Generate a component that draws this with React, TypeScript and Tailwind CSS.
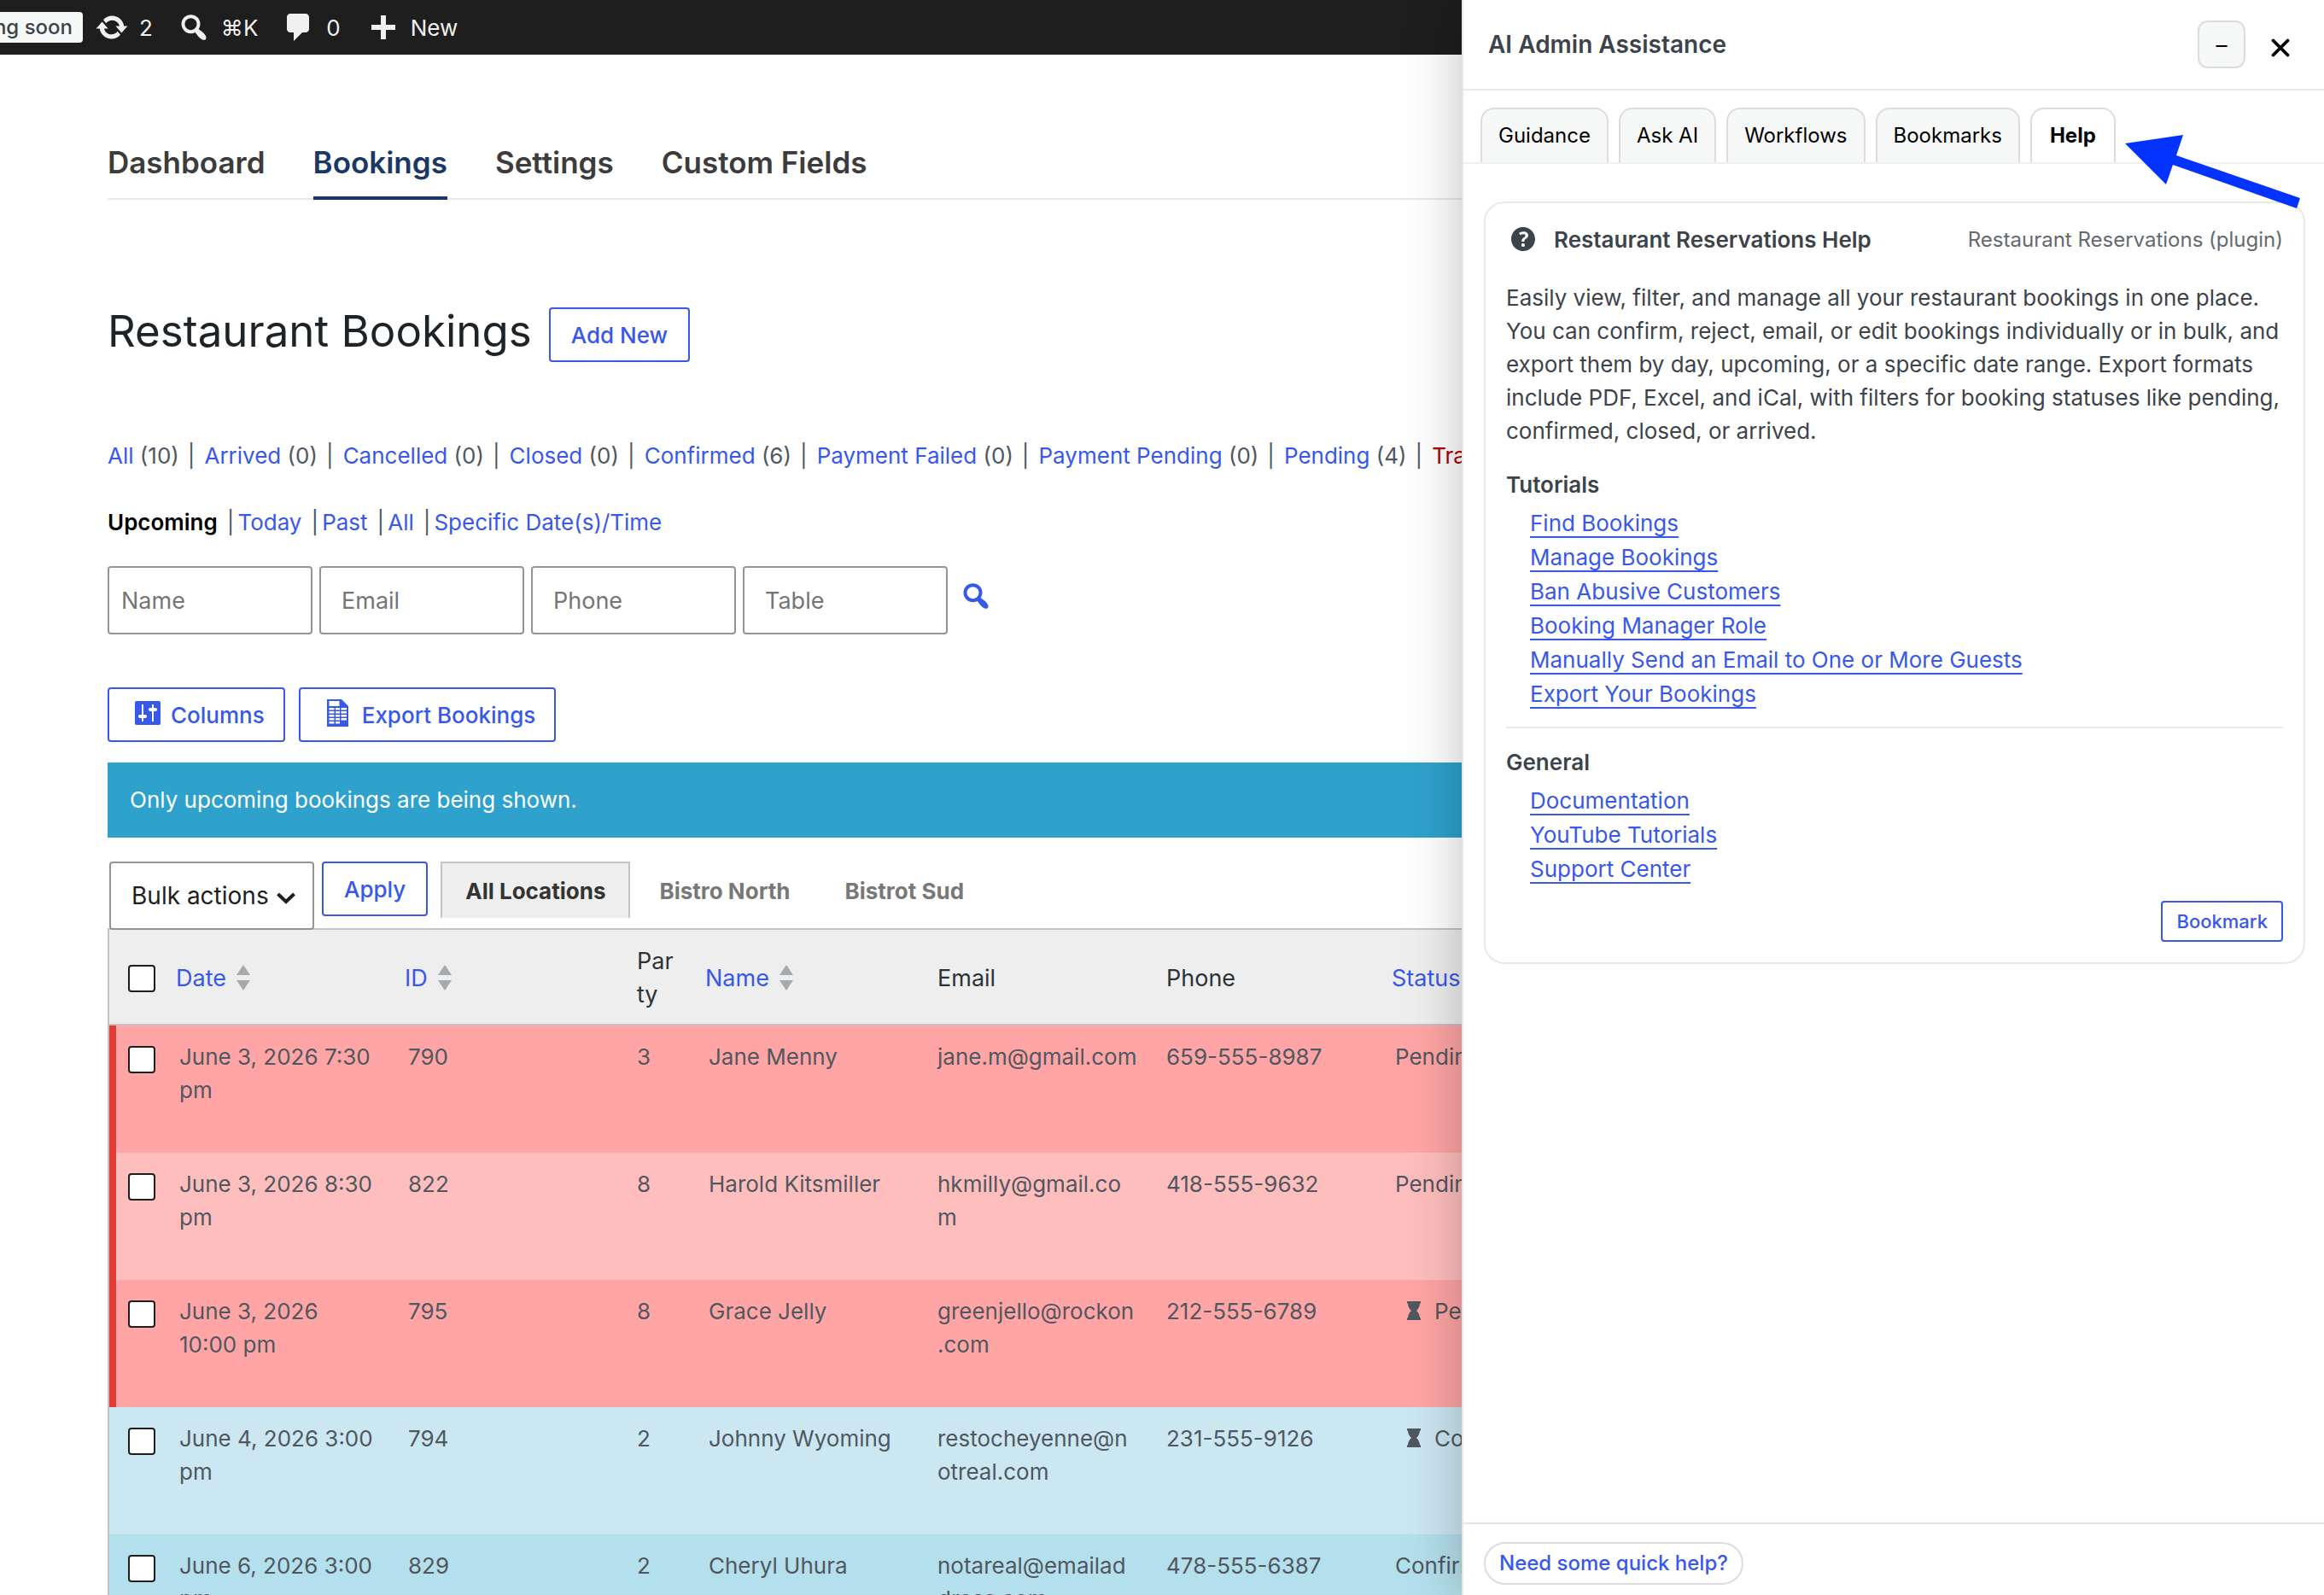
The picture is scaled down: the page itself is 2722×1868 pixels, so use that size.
import React from 'react';

const statusFilters = [
    { label: 'All', count: 10 },
    { label: 'Arrived', count: 0 },
    { label: 'Cancelled', count: 0 },
    { label: 'Closed', count: 0 },
    { label: 'Confirmed', count: 6 },
    { label: 'Payment Failed', count: 0 },
    { label: 'Payment Pending', count: 0 },
    { label: 'Pending', count: 4 }
];

const bookings = [
    { id: 790, date: 'June 3, 2026 7:30 pm', party: 3, name: 'Jane Menny', email: 'jane.m@gmail.com', phone: '659-555-8987', status: 'Pending', late: false, row: 'bg-[#ffa5a5]', edge: 'border-[#e13c38]' },
    { id: 822, date: 'June 3, 2026 8:30 pm', party: 8, name: 'Harold Kitsmiller', email: 'hkmilly@gmail.com', phone: '418-555-9632', status: 'Pending', late: false, row: 'bg-[#ffbebe]', edge: 'border-[#e13c38]' },
    { id: 795, date: 'June 3, 2026 10:00 pm', party: 8, name: 'Grace Jelly', email: 'greenjello@rockon.com', phone: '212-555-6789', status: 'Pending', late: true, row: 'bg-[#ffa5a5]', edge: 'border-[#e13c38]' },
    { id: 794, date: 'June 4, 2026 3:00 pm', party: 2, name: 'Johnny Wyoming', email: 'restocheyenne@notreal.com', phone: '231-555-9126', status: 'Confirmed', late: true, row: 'bg-[#cbe7f2]', edge: 'border-transparent' },
    { id: 829, date: 'June 6, 2026 3:00 pm', party: 2, name: 'Cheryl Uhura', email: 'notareal@emailaddress.com', phone: '478-555-6387', status: 'Confirmed', late: false, row: 'bg-[#b4dfec]', edge: 'border-transparent' }
];

const tutorials = [
    'Find Bookings',
    'Manage Bookings',
    'Ban Abusive Customers',
    'Booking Manager Role',
    'Manually Send an Email to One or More Guests',
    'Export Your Bookings'
];

const general = ['Documentation', 'YouTube Tutorials', 'Support Center'];

const SearchIcon = ({ className }: { className: string }) => (
    <svg viewBox="0 0 20 20" className={className} fill="currentColor" aria-hidden="true">
        <path d="M12.14 4.18c1.87 1.87 2.11 4.75.72 6.89.12.1.22.21.36.31.2.16.47.36.81.59.34.24.56.39.66.47.42.31.73.57.94.78.32.32.6.65.84 1 .25.35.44.69.59 1.04.14.35.21.68.18 1-.02.32-.14.59-.36.81s-.49.34-.81.36c-.31.02-.65-.04-.99-.19-.35-.14-.7-.34-1.04-.59-.35-.24-.68-.52-1-.84-.21-.21-.47-.52-.77-.93-.1-.13-.25-.35-.47-.66-.22-.32-.4-.57-.56-.78-.16-.2-.29-.35-.44-.5-2.07 1.09-4.69.76-6.44-.98-2.14-2.15-2.14-5.64 0-7.78 2.15-2.15 5.63-2.15 7.78 0zm-1.41 6.36c1.36-1.37 1.36-3.58 0-4.95-1.37-1.37-3.59-1.37-4.95 0-1.37 1.37-1.37 3.58 0 4.95 1.36 1.37 3.58 1.37 4.95 0z" />
    </svg>
);

const AdminBar = () => (
    <header className="flex h-16 items-center bg-[#1e1e1e] text-[26px] text-[#f0f0f1]">
        <a href="#" className="flex h-9 w-[97px] justify-end items-center overflow-hidden whitespace-nowrap rounded-r-[4px] bg-[#f6f7f7] pr-3 text-[24px] font-medium text-[#3c434a]">
            Coming soon
        </a>
        <a href="#" className="ml-[14px] flex items-center gap-3">
            <svg viewBox="0 0 20 20" className="size-10" fill="currentColor" aria-hidden="true">
                <path d="M10.2 3.28c3.53 0 6.43 2.61 6.92 6h2.08l-3.5 4-3.5-4h2.32c-.45-1.97-2.21-3.45-4.32-3.45-1.45 0-2.73.71-3.54 1.78L4.95 5.66C6.23 4.2 8.11 3.28 10.2 3.28zm-.4 13.44c-3.52 0-6.43-2.61-6.92-6H.8l3.5-4c1.17 1.33 2.33 2.67 3.5 4H5.48c.45 1.97 2.21 3.45 4.32 3.45 1.45 0 2.73-.71 3.54-1.78l1.71 1.95c-1.28 1.46-3.15 2.38-5.25 2.38z" />
            </svg>
            2
        </a>
        <a href="#" className="ml-7 flex items-center gap-3">
            <SearchIcon className="size-10" />
            ⌘K
        </a>
        <a href="#" className="ml-7 flex items-center gap-3">
            <svg viewBox="0 0 20 20" className="size-10" fill="currentColor" aria-hidden="true">
                <path d="M5 2h9q.82 0 1.410.59T16 4v7q0 .82-.59 1.410T14 13h-2l-5 5v-5H5q-.82 0-1.410-.59T3 11V4q0-.82.59-1.410T5 2z" />
            </svg>
            0
        </a>
        <a href="#" className="ml-[30px] flex items-center gap-3">
            <svg viewBox="0 0 20 20" className="size-10" fill="currentColor" aria-hidden="true">
                <path d="M17 8.500v3h-5.500V17h-3v-5.500H3v-3h5.500V3h3v5.500H17z" />
            </svg>
            New
        </a>
    </header>
);

const SortArrows = () => (
    <svg viewBox="0 0 16 30" className="h-[30px] w-4" fill="#a7aaad" aria-hidden="true">
        <path d="M8 0l8 12H0zM8 30L0 18h16z" />
    </svg>
);

const SortHeader = ({ label }: { label: string }) => (
    <th scope="col" className="px-4 pt-[2px] text-left font-normal">
        <a href="#" className="flex items-center gap-3 text-[#3858e9]">
            {label}
            <SortArrows />
        </a>
    </th>
);

const Check = ({ label }: { label: string }) => (
    <input
        type="checkbox"
        aria-label={label}
        className="block size-8 appearance-none rounded-[4px] border-2 border-[#1e1e1e] bg-white checked:bg-[#3858e9]"
    />
);

const BookingsTable = () => (
    <div className="overflow-hidden">
        <table className="w-[1757px] table-fixed border-collapse border-2 border-[#c3c4c7] text-[26px] leading-[39px] text-[#50575e]">
            <colgroup>
                <col className="w-[63px]" />
                <col className="w-[268px]" />
                <col className="w-[268px]" />
                <col className="w-[84px]" />
                <col className="w-[268px]" />
                <col className="w-[268px]" />
                <col className="w-[268px]" />
                <col className="w-[268px]" />
            </colgroup>
            <thead className="border-b-2 border-[#c3c4c7] bg-[#eee] text-[27px] text-[#2c3338]">
                <tr className="h-28">
                    <td className="pt-1 pl-[22px]">
                        <Check label="Select all" />
                    </td>
                    <SortHeader label="Date" />
                    <SortHeader label="ID" />
                    <th scope="col" className="wrap-anywhere px-5 pt-[2px] text-left font-normal">Party</th>
                    <SortHeader label="Name" />
                    <th scope="col" className="px-5 pt-[2px] text-left font-normal">Email</th>
                    <th scope="col" className="px-5 pt-[2px] text-left font-normal">Phone</th>
                    <SortHeader label="Status" />
                </tr>
            </thead>
            <tbody>
                {bookings.map((booking) => (
                    <tr key={booking.id} className={`h-[149px] align-top ${booking.row}`}>
                        <td className="p-0">
                            <div className={`h-[149px] border-l-8 pt-6 pl-[14px] ${booking.edge}`}>
                                <Check label={`Select booking ${booking.id}`} />
                            </div>
                        </td>
                        <td className="px-5 pt-[17px]">{booking.date}</td>
                        <td className="px-5 pt-[17px]">{booking.id}</td>
                        <td className="px-5 pt-[17px]">{booking.party}</td>
                        <td className="px-5 pt-[17px]">{booking.name}</td>
                        <td className="wrap-anywhere pt-[17px] pr-[14px] pl-5">{booking.email}</td>
                        <td className="px-5 pt-[17px]">{booking.phone}</td>
                        <td className="px-5 pt-[17px]">
                            {booking.late && (
                                <svg viewBox="0 0 16 22" className="mr-4 ml-[14px] inline h-[22px] w-4 align-[-1px]" fill="currentColor" aria-label="Late">
                                    <path d="M0 0h16v2.500h-1c-.3 4-1.500 6-4 8.500 2.500 2.500 3.700 4.500 4 8.500h1V22H0v-2.500h1c.3-4 1.500-6 4-8.500-2.500-2.500-3.700-4.500-4-8.500H0z" />
                                </svg>
                            )}
                            {booking.status}
                        </td>
                    </tr>
                ))}
            </tbody>
        </table>
    </div>
);

const SearchField = ({ label, className }: { label: string; className: string }) => (
    <input
        type="text"
        aria-label={label}
        placeholder={label}
        className={`h-20 w-60 rounded-[4px] border-2 border-[#949494] text-[27px] placeholder:text-[#757575] ${className}`}
    />
);

const BookingsPage = () => (
    <main className="pl-[126px]">
        <nav className="mt-24 flex gap-14 border-b-2 border-[#e8e8e8] text-[35px] leading-[60px] font-semibold text-[#3c3c3c]">
            <a href="#">Dashboard</a>
            <a href="#" className="-mb-[2px] h-[74px] border-b-4 border-[#1a3866] text-[#1a3866]">Bookings</a>
            <a href="#">Settings</a>
            <a href="#">Custom Fields</a>
        </nav>

        <div className="mt-[126px] flex items-start gap-5">
            <h1 className="text-[51px] leading-14 text-[#1d2327]">Restaurant Bookings</h1>
            <button type="button" className="h-16 rounded-[4px] border-2 border-[#3858e9] px-6 text-[26px] font-medium text-[#3858e9]">
                Add New
            </button>
        </div>

        <ul className="mt-[90px] flex whitespace-nowrap text-[26px] leading-[39px] text-[#50575e]">
            {statusFilters.map(({ label, count }) => (
                <li key={label}>
                    <a href="#" className="text-[#3858e9]">{label}</a> ({count})<span className="pr-[11px] pl-[10px]">|</span>
                </li>
            ))}
            <li><a href="#" className="text-[#a00]">Trash</a></li>
        </ul>

        <ul className="mt-[39px] flex gap-[11px] text-[26px] leading-[39px] text-[#50575e]">
            <li><a href="#" className="font-semibold text-black">Upcoming</a></li>
            {['Today', 'Past', 'All', 'Specific Date(s)/Time'].map((label) => (
                <li key={label} className="flex gap-1">
                    |<a href="#" className="text-[#3858e9]">{label}</a>
                </li>
            ))}
        </ul>

        <form className="mt-8 flex gap-2">
            <SearchField label="Name" className="px-[14px]" />
            <SearchField label="Email" className="px-6" />
            <SearchField label="Phone" className="px-6" />
            <SearchField label="Table" className="px-6" />
            <button type="button" aria-label="Search" className="mt-[15px] ml-[5px] h-10 text-[#3858e9]">
                <SearchIcon className="size-10" />
            </button>
        </form>

        <div className="mt-[62px] flex gap-4 text-[26px] font-medium text-[#3858e9]">
            <button type="button" className="flex h-16 items-center gap-3 rounded-[4px] border-2 border-[#3858e9] pr-[22px] pl-[30px]">
                <svg viewBox="0 0 30 28" className="mb-1 h-7 w-[30px]" aria-hidden="true">
                    <rect width="30" height="28" rx="2" fill="currentColor" />
                    <path d="M9 4v20M21 4v20" stroke="#fff" strokeWidth="2" />
                    <path d="M6 18h6M18 10h6" stroke="#fff" strokeWidth="4" strokeLinecap="round" />
                </svg>
                Columns
            </button>
            <button type="button" className="flex h-16 items-center gap-4 rounded-[4px] border-2 border-[#3858e9] pr-[22px] pl-[31px]">
                <svg viewBox="0 0 25 32" className="mb-1 h-8 w-[25px]" aria-hidden="true">
                    <path d="M0 0h17l8 8v24H0z" fill="currentColor" />
                    <path d="M2.500 2h12v6h-12zM2.500 10h6v2.500h-6zM10 10h5v2.500h-5zM16.500 10H23v2.500h-6.500zM2.500 14h6v2.500h-6zM10 14h5v2.500h-5zM16.500 14H23v2.500h-6.500zM2.500 18h6v2.500h-6zM10 18h5v2.500h-5zM16.500 18H23v2.500h-6.500zM2.500 22h6v2.500h-6zM10 22h5v2.500h-5zM16.500 22H23v2.500h-6.500zM2.500 26h6v2.500h-6zM10 26h5v2.500h-5z" fill="#fff" />
                </svg>
                Export Bookings
            </button>
        </div>

        <p className="mt-6 bg-[#2ea2cc] px-[26px] text-[26px] leading-[88px] text-white">Only upcoming bookings are being shown.</p>

        <div className="mt-7 flex h-[78px] pl-[2px] text-[26px]">
            <div className="relative mr-[9px] h-20 w-60 shrink-0">
                <select aria-label="Bulk actions" className="h-20 w-full appearance-none rounded-[4px] border-2 border-[#949494] bg-white pl-6 text-[28px] text-[#1e1e1e]">
                    <option>Bulk actions</option>
                </select>
                <svg viewBox="0 0 22 14" className="pointer-events-none absolute top-9 right-[22px] h-[14px] w-[22px]" fill="none" stroke="#1e1e1e" strokeWidth="4" aria-hidden="true">
                    <path d="M1.500 2l9.500 9 9.500-9" />
                </svg>
            </div>
            <button type="button" className="mr-[15px] h-16 rounded-[4px] border-2 border-[#3858e9] px-6 font-medium text-[#3858e9]">Apply</button>
            <div className="flex font-bold text-[#787878]">
                <a href="#" className="h-[66px] border-2 border-b-0 border-[#c3c4c7] bg-[#eee] px-[27px] leading-[66px] text-[#333]">All Locations</a>
                <a href="#" className="pl-[34px] leading-[70px]">Bistro North</a>
                <a href="#" className="pl-16 leading-[70px]">Bistrot Sud</a>
            </div>
        </div>

        <BookingsTable />
    </main>
);

const HelpLinks = ({ title, links }: { title: string; links: string[] }) => (
    <section>
        <h3 className="font-semibold leading-10">{title}</h3>
        <ul className="mt-[5px] pl-7">
            {links.map((link) => (
                <li key={link} className="leading-10">
                    <a href="#" className="text-[#3858e9] underline decoration-2 underline-offset-[6px]">{link}</a>
                </li>
            ))}
        </ul>
    </section>
);

const AssistancePanel = () => (
    <aside className="relative z-10 flex w-[1010px] shrink-0 flex-col border-l-2 border-[#e5e5e5] bg-white text-[#3c434a] shadow-[0_0_60px_rgba(0,0,0,0.25)]">
        <div className="flex h-[106px] items-center border-b-2 border-[#e8e8e8] pr-10 pl-[29px]">
            <h2 className="grow text-[28px] font-semibold">AI Admin Assistance</h2>
            <button type="button" aria-label="Minimize" className="mr-[30px] flex size-14 items-center justify-center rounded-xl border-2 border-[#dcdcde] bg-[#f6f7f7] text-[26px] text-black">
                –
            </button>
            <button type="button" aria-label="Close">
                <svg viewBox="0 0 22 22" className="mt-2 size-[22px]" stroke="#000" strokeWidth="3.800" strokeLinecap="round" aria-hidden="true">
                    <path d="M2.500 2.500l17 17M19.500 2.500l-17 17" />
                </svg>
            </button>
        </div>

        <div className="mt-5 flex gap-3 border-b-2 border-[#f0f0f1] pl-5 text-[24px] text-black">
            {['Guidance', 'Ask AI', 'Workflows', 'Bookmarks'].map((tab) => (
                <button key={tab} type="button" className="h-16 rounded-t-2xl border-2 border-b-0 border-[#dcdcde] bg-[#f6f7f7] px-[19px]">
                    {tab}
                </button>
            ))}
            <button type="button" className="h-16 rounded-t-2xl border-2 border-b-0 border-[#dcdcde] bg-white px-[21px] font-bold">Help</button>
        </div>

        <article className="mt-11 mr-[22px] ml-6 rounded-3xl border-2 border-[#e8e8e8] px-6 pt-[22px] pb-6 text-[26px] leading-[39px]">
            <div className="flex items-center">
                <svg viewBox="0 0 20 20" className="mr-4 size-10" fill="currentColor" aria-hidden="true">
                    <path d="M17 10c0-3.870-3.140-7-7-7-3.870 0-7 3.130-7 7s3.130 7 7 7c3.860 0 7-3.130 7-7zm-6.300 1.480H9.140v-.43c0-.38.080-.7.240-.98s.460-.57.880-.89c.41-.29.680-.53.810-.71.140-.18.200-.39.200-.62 0-.25-.090-.44-.280-.58-.190-.13-.450-.190-.790-.190-.580 0-1.250.190-2 .570l-.640-1.280c.870-.49 1.800-.74 2.770-.74.810 0 1.450.2 1.920.58.480.390.710.910.710 1.550 0 .43-.090.8-.290 1.110-.190.320-.570.670-1.110 1.060-.380.280-.610.490-.710.630-.1.150-.150.340-.150.570v.350zm-1.470 2.740c-.180-.170-.270-.420-.270-.730 0-.33.080-.58.260-.75s.430-.25.770-.25c.320 0 .57.090.75.260s.27.420.27.740c0 .3-.090.550-.270.720-.180.180-.430.270-.750.270-.330 0-.580-.090-.760-.260z" />
                </svg>
                <h3 className="grow font-semibold">Restaurant Reservations Help</h3>
                <span className="text-[24px] text-[#646970]">Restaurant Reservations (plugin)</span>
            </div>
            <p className="mt-[29px] mb-6">
                Easily view, filter, and manage all your restaurant bookings in one place. You can confirm, reject, email, or edit bookings individually or in bulk, and export them by day, upcoming, or a specific date range. Export formats include PDF, Excel, and iCal, with filters for booking statuses like pending, confirmed, closed, or arrived.
            </p>
            <HelpLinks title="Tutorials" links={tutorials} />
            <hr className="mt-[18px] mb-5 border-t-2 border-[#e8e8e8]" />
            <HelpLinks title="General" links={general} />
            <div className="mt-[17px] flex justify-end">
                <button type="button" className="h-12 rounded-[4px] border-2 border-[#3858e9] px-4 text-[22px] leading-7 font-medium text-[#3858e9]">
                    Bookmark
                </button>
            </div>
        </article>

        <footer className="mt-auto border-t-2 border-[#e5e5e5] px-6 pt-[21px] pb-3">
            <button type="button" className="h-[50px] rounded-full border-2 border-[#dcdcde] px-4 text-[24px] font-medium text-[#3858e9]">
                Need some quick help?
            </button>
        </footer>

        {/* pointer to the Help tab */}
        <svg viewBox="0 0 206 86" className="pointer-events-none absolute top-[158px] left-[775px] h-[86px] w-[206px]" fill="#0433ff" aria-hidden="true">
            <path d="M0 10L68 0l-8 24 145 50-4 12L56 35l-8 23z" />
        </svg>
    </aside>
);

export default function App() {
    return (
        <div className="flex h-screen overflow-hidden bg-white font-['Inter',sans-serif]">
            <div className="min-w-0 grow overflow-hidden">
                <AdminBar />
                <BookingsPage />
            </div>
            <AssistancePanel />
        </div>
    );
}
